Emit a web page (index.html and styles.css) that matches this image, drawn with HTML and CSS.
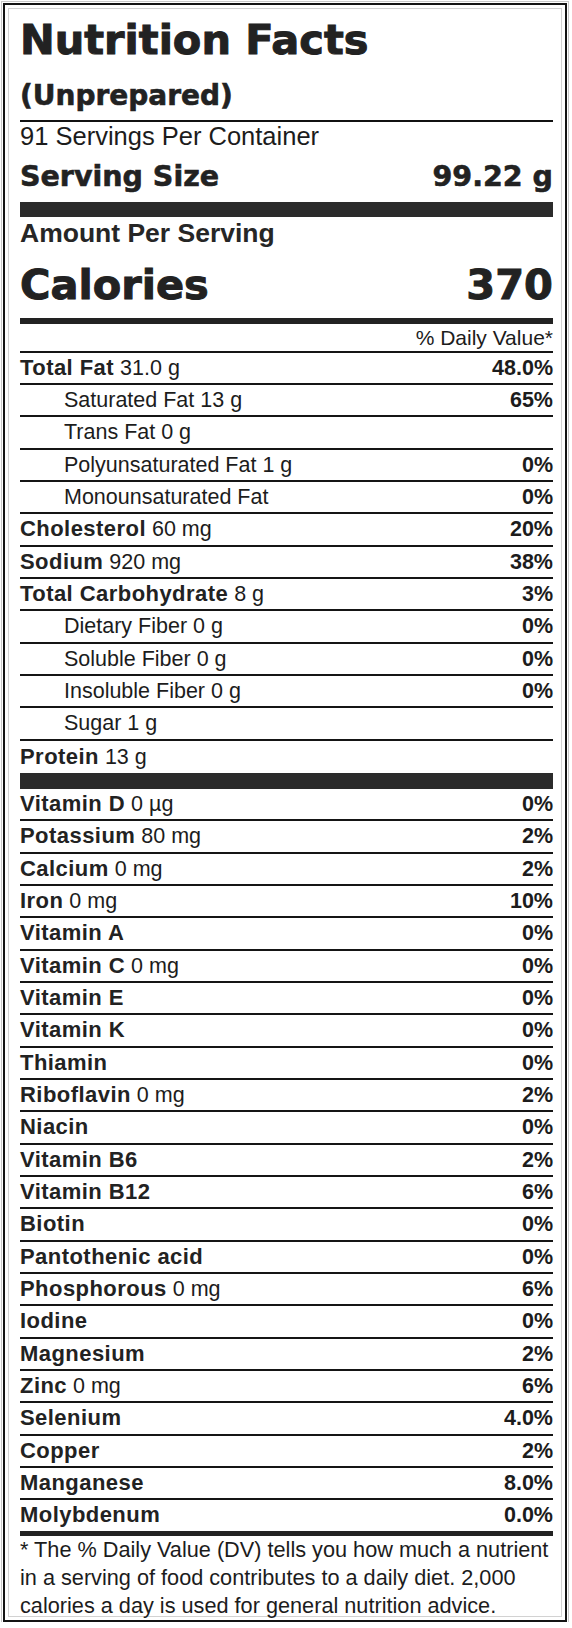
FILE: index.html
```html
<!DOCTYPE html>
<html lang="en">
<head>
    <meta charset="UTF-8">
    <title>Nutrition Facts</title>
    <link rel="stylesheet" href="styles.css">
</head>
<body>

<div class="label">
    <div class="heavy title">Nutrition Facts</div>
    <div class="heavy subtitle">(Unprepared)</div>
    <div class="servings">91 Servings Per Container</div>
    <div class="heavy serving-size"><span>Serving Size</span><span>99.22 g</span></div>
    <div class="bar"></div>

    <div class="amount">Amount Per Serving</div>
    <div class="heavy calories"><span>Calories</span><span>370</span></div>
    <div class="rule-thick"></div>
    <div class="dv-head">% Daily Value*</div>

    <div class="row"><span><b>Total Fat</b> 31.0 g</span><span class="pct">48.0%</span></div>
    <div class="row sub"><span>Saturated Fat 13 g</span><span class="pct">65%</span></div>
    <div class="row sub"><span>Trans Fat 0 g</span></div>
    <div class="row sub"><span>Polyunsaturated Fat 1 g</span><span class="pct">0%</span></div>
    <div class="row sub"><span>Monounsaturated Fat</span><span class="pct">0%</span></div>
    <div class="row"><span><b>Cholesterol</b> 60 mg</span><span class="pct">20%</span></div>
    <div class="row"><span><b>Sodium</b> 920 mg</span><span class="pct">38%</span></div>
    <div class="row"><span><b>Total Carbohydrate</b> 8 g</span><span class="pct">3%</span></div>
    <div class="row sub"><span>Dietary Fiber 0 g</span><span class="pct">0%</span></div>
    <div class="row sub"><span>Soluble Fiber 0 g</span><span class="pct">0%</span></div>
    <div class="row sub"><span>Insoluble Fiber 0 g</span><span class="pct">0%</span></div>
    <div class="row sub"><span>Sugar 1 g</span></div>
    <div class="row protein"><span><b>Protein</b> 13 g</span></div>
    <div class="bar bar-lower"></div>

    <div class="row first"><span><b>Vitamin D</b> 0 µg</span><span class="pct">0%</span></div>
    <div class="row"><span><b>Potassium</b> 80 mg</span><span class="pct">2%</span></div>
    <div class="row"><span><b>Calcium</b> 0 mg</span><span class="pct">2%</span></div>
    <div class="row"><span><b>Iron</b> 0 mg</span><span class="pct">10%</span></div>
    <div class="row"><span><b>Vitamin A</b></span><span class="pct">0%</span></div>
    <div class="row"><span><b>Vitamin C</b> 0 mg</span><span class="pct">0%</span></div>
    <div class="row"><span><b>Vitamin E</b></span><span class="pct">0%</span></div>
    <div class="row"><span><b>Vitamin K</b></span><span class="pct">0%</span></div>
    <div class="row"><span><b>Thiamin</b></span><span class="pct">0%</span></div>
    <div class="row"><span><b>Riboflavin</b> 0 mg</span><span class="pct">2%</span></div>
    <div class="row"><span><b>Niacin</b></span><span class="pct">0%</span></div>
    <div class="row"><span><b>Vitamin B6</b></span><span class="pct">2%</span></div>
    <div class="row"><span><b>Vitamin B12</b></span><span class="pct">6%</span></div>
    <div class="row"><span><b>Biotin</b></span><span class="pct">0%</span></div>
    <div class="row"><span><b>Pantothenic acid</b></span><span class="pct">0%</span></div>
    <div class="row"><span><b>Phosphorous</b> 0 mg</span><span class="pct">6%</span></div>
    <div class="row"><span><b>Iodine</b></span><span class="pct">0%</span></div>
    <div class="row"><span><b>Magnesium</b></span><span class="pct">2%</span></div>
    <div class="row"><span><b>Zinc</b> 0 mg</span><span class="pct">6%</span></div>
    <div class="row"><span><b>Selenium</b></span><span class="pct">4.0%</span></div>
    <div class="row"><span><b>Copper</b></span><span class="pct">2%</span></div>
    <div class="row"><span><b>Manganese</b></span><span class="pct">8.0%</span></div>
    <div class="row"><span><b>Molybdenum</b></span><span class="pct">0.0%</span></div>
    <div class="rule-foot"></div>

    <p class="footnote">* The % Daily Value (DV) tells you how much a nutrient in a serving of food contributes to a daily diet. 2,000 calories a day is used for general nutrition advice.</p>
</div>

</body>
</html>
```

FILE: styles.css
```css
body {
    margin: 0;
    background: #fff;
    font-family: "Liberation Sans", Arial, sans-serif;
    color: #1c1c1c;
}

.label {
    width: 564px;
    box-sizing: border-box;
    margin: 3px 0 0 3px;
    padding: 11px 12px 0 15px;
    border: 2px solid #141414;
    box-shadow: 0 0 0 1px #fff, 0 0 0 2px #c8c8c8,
                inset 0 0 0 3px #fff, inset 0 0 0 4px #d2d2d2;
}

.heavy {
    font-family: "DejaVu Sans", sans-serif;
    font-weight: bold;
    color: #222;
    -webkit-text-stroke: 0.6px #222;
}

.title {
    font-size: 41.5px;
    line-height: 48px;
    -webkit-text-stroke-width: 1px;
}

.subtitle {
    font-size: 28px;
    line-height: 36px;
    margin-top: 14px;
    padding-bottom: 6px;
    border-bottom: 2px solid #111;
}

.servings {
    font-size: 25.5px;
    line-height: 28px;
}

.serving-size {
    display: flex;
    justify-content: space-between;
    font-size: 28.5px;
    line-height: 36px;
    margin-top: 9px;
}

.bar {
    height: 15px;
    margin-top: 7px;
    background: #2b2b2b;
}

.bar-lower {
    height: 16px;
    margin-top: 0;
}

.amount {
    font-size: 26.5px;
    font-weight: bold;
    color: #262626;
    line-height: 30px;
    padding-top: 1px;
}

.calories {
    display: flex;
    justify-content: space-between;
    font-size: 41.5px;
    line-height: 48px;
    margin-top: 13px;
    -webkit-text-stroke-width: 1px;
}

.rule-thick {
    height: 6px;
    margin-top: 9px;
    background: #222;
}

.dv-head {
    text-align: right;
    font-size: 21px;
    line-height: 24.7px;
    padding-top: 2px;
}

.row {
    display: flex;
    justify-content: space-between;
    border-top: 2px solid #151515;
    font-size: 21.5px;
    line-height: 30.35px;
}

.row b {
    font-size: 22px;
    color: #222;
    letter-spacing: 0.45px;
}

.row.first { border-top: none; }
.row.sub { padding-left: 44px; }
.row.protein { line-height: 32px; }

.pct { font-weight: bold; }

.rule-foot {
    height: 5px;
    background: #222;
}

.footnote {
    margin: 0;
    font-size: 21.7px;
    line-height: 28px;
}
```
